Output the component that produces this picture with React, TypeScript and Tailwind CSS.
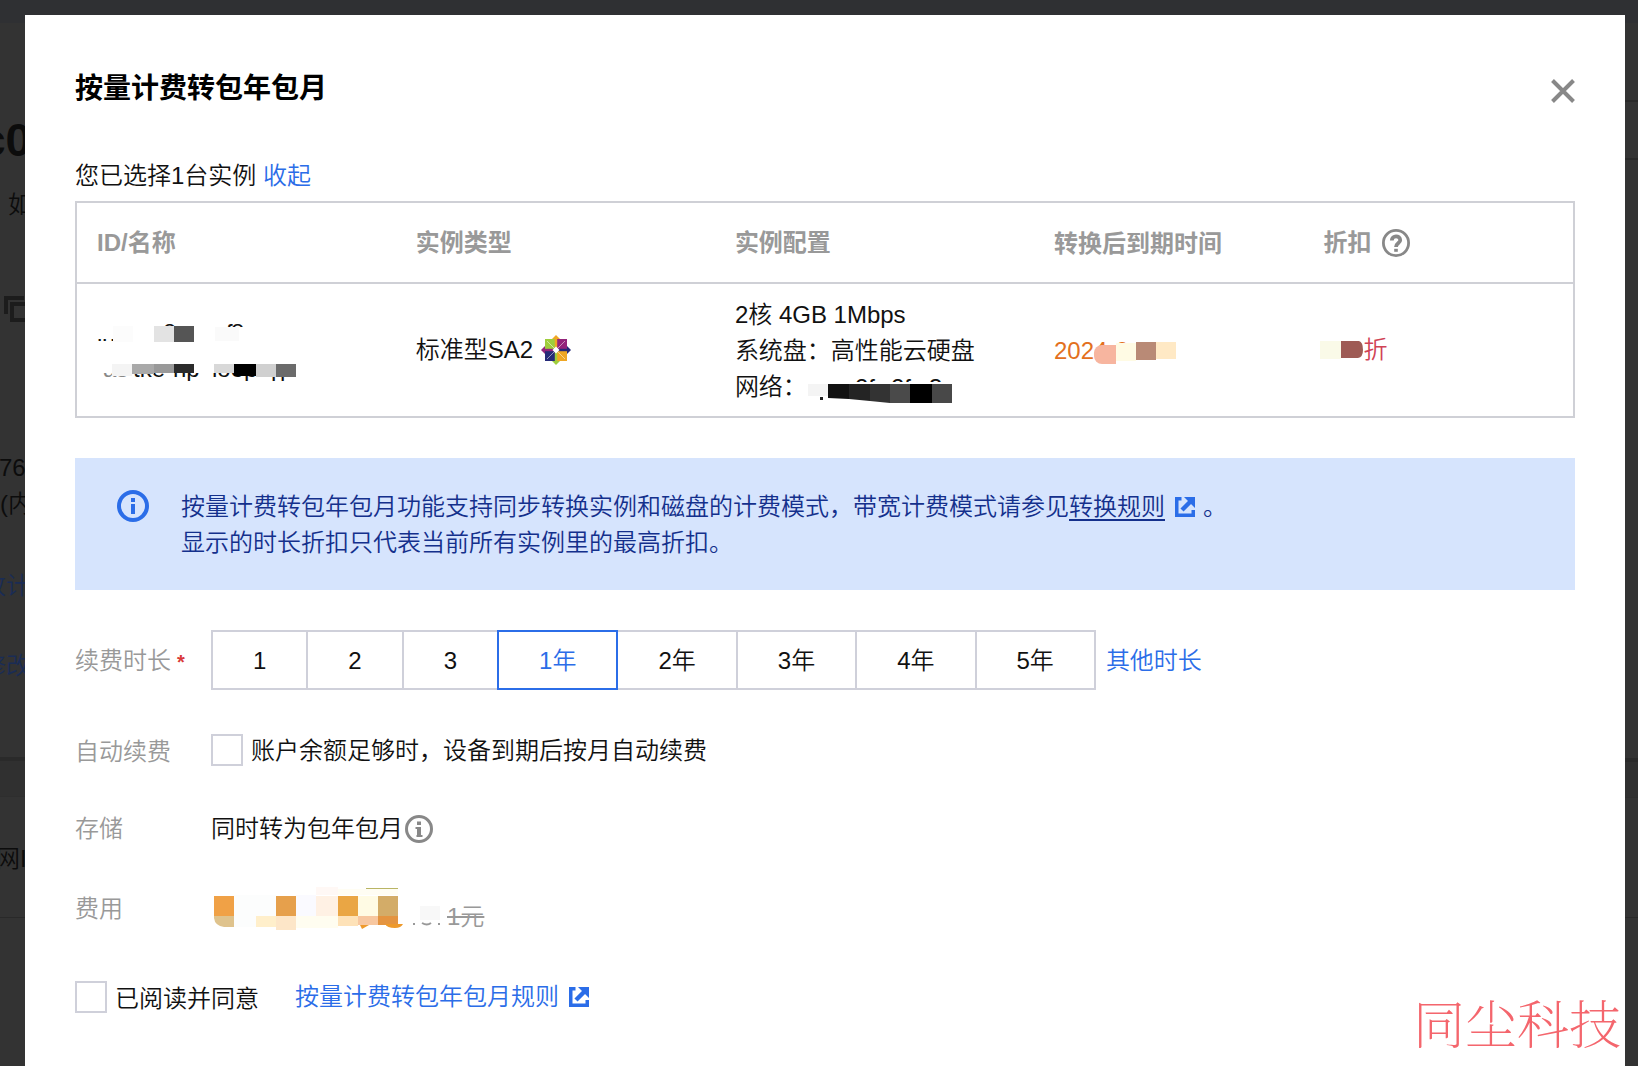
import React from "react";

const sans = "font-['Liberation_Sans','Noto_Sans_CJK_SC',sans-serif]";

function ExternalIcon() {
  return (
    <svg width="20" height="20" viewBox="0 0 20 20" fill="none" className="shrink-0" aria-hidden="true">
      <path d="M6.500 0H0V20H20V13H16.500V16.500H3.500V3.500H6.500Z" fill="#2b6de8" />
      <path d="M7 13L15 5" stroke="#2b6de8" strokeWidth="4.400" />
      <path d="M9 0H20V11L14.500 5.500Z" fill="#2b6de8" />
    </svg>
  );
}

function CentosLogo() {
  return (
    <svg width="30" height="30" viewBox="0 0 30 30" className="shrink-0" role="img" aria-label="CentOS">
      <path d="M4 4h10.500v10.500H4z" fill="#9fcd3c" />
      <path d="M15.500 4H26v10.500H15.500z" fill="#93247a" />
      <path d="M4 15.500h10.500V26H4z" fill="#262a78" />
      <path d="M15.500 15.500H26V26H15.500z" fill="#efa724" />
      <path d="M15 0l4 4h-8z" fill="#efa724" />
      <path d="M30 15l-4 4v-8z" fill="#262a78" />
      <path d="M15 30l-4-4h8z" fill="#9fcd3c" />
      <path d="M0 15l4-4v8z" fill="#93247a" />
      <path d="M13.800 3h2.400v10h-2.400z" fill="#efa724" />
      <path d="M17 13.800h10v2.400H17z" fill="#262a78" />
      <path d="M13.800 17h2.400v10h-2.400z" fill="#9fcd3c" />
      <path d="M3 13.800h10v2.400H3z" fill="#93247a" />
      <path d="M6 6l18 18M24 6L6 24" stroke="#fff" strokeWidth="1" opacity="0.500" />
      <path d="M15 11.500l3.500 3.500-3.500 3.500-3.500-3.500z" fill="#fff" />
    </svg>
  );
}

function InfoIcon({ size, color, stroke }: { size: number; color: string; stroke: number }) {
  return (
    <svg width={size} height={size} viewBox="0 0 32 32" fill="none" className="shrink-0" aria-hidden="true">
      <circle cx="16" cy="16" r={16 - stroke / 2} stroke={color} strokeWidth={stroke} />
      <path d="M14 8h4v4h-4zM14 14h4v10h-4z" fill={color} />
    </svg>
  );
}

function InfoSerifIcon() {
  return (
    <svg width="28" height="28" viewBox="0 0 28 28" fill="none" className="shrink-0" aria-hidden="true">
      <circle cx="14" cy="14" r="12.500" stroke="#888" strokeWidth="3" />
      <path d="M12 6.500h4v3.500h-4zM10.500 12H16v8h1.500v2h-6v-2H12v-6h-1.500z" fill="#888" />
    </svg>
  );
}

function HelpIcon() {
  return (
    <svg width="28" height="28" viewBox="0 0 28 28" fill="none" className="shrink-0" role="img" aria-label="帮助">
      <circle cx="14" cy="14" r="12.600" stroke="#888" strokeWidth="2.800" />
      <path d="M9.800 11.500C9.800 6 18.200 6 18.200 11.200C18.200 14 14 14 14 18" stroke="#888" strokeWidth="3.800" />
      <path d="M12.200 19.800h3.600v3h-3.600z" fill="#888" />
    </svg>
  );
}

type Block = [number, number, number, number, string];
function Blocks({ items }: { items: Block[] }) {
  return (
    <>
      {items.map(([x, y, w, h, c], i) => (
        <rect key={i} x={x} y={y} width={w} height={h} fill={c} />
      ))}
    </>
  );
}

function MaskedId() {
  return (
    <svg width="206" height="62" viewBox="0 0 206 62" className="block" fontSize="24" aria-hidden="true">
      <g fill="#111">
        <text x="0" y="22">i</text>
        <text x="5" y="22">n</text>
        <text x="66" y="22">8</text>
        <text x="129" y="22">f</text>
        <text x="134" y="22">8</text>
        <text x="36" y="58">tke</text>
        <text x="76" y="58">np</text>
        <text x="115" y="58">loop</text>
        <text x="166" y="58">q</text>
        <text x="183" y="58">p</text>
      </g>
      <text x="6" y="58" fill="#888">as</text>
      <Blocks
        items={[
          [0, 0, 60, 20, "#fff"],
          [60, 8, 90, 16, "#fff"],
          [0, 24, 206, 30, "#fff"],
          [16, 7, 20, 16, "#fcfcfc"],
          [57, 7, 20, 16, "#e3e3e3"],
          [77, 7, 20, 16, "#555"],
          [118, 8, 24, 14, "#fafafa"],
          [15, 45, 20, 12, "#f4f4f4"],
          [35, 45, 22, 10, "#a9a9a9"],
          [57, 45, 20, 9, "#999"],
          [77, 45, 20, 9, "#2b2b2b"],
          [117, 45, 20, 9, "#d8d8d8"],
          [137, 45, 22, 12, "#000"],
          [159, 45, 20, 13, "#d0d0d0"],
          [179, 45, 20, 13, "#6b6b6b"],
        ]}
      />
    </svg>
  );
}

function MaskedNetwork() {
  return (
    <svg width="150" height="32" viewBox="0 -3 150 32" className="block shrink-0" fontSize="24" aria-hidden="true">
      <g fill="#111">
        <text x="48" y="22">2f</text>
        <text x="84" y="22">2f</text>
        <text x="122" y="22">3c</text>
      </g>
      <path d="M0 8H150V30H0z" fill="#fff" />
      <Blocks items={[[1, 10, 20, 12, "#f4f4f4"], [13, 23, 3, 3, "#222"]]} />
      <path d="M21 10H42V25L21 24z" fill="#111" />
      <path d="M42 10H63V27L42 25z" fill="#242424" />
      <path d="M63 10H83V29L63 27z" fill="#333" />
      <path d="M83 10H103V30H88L83 29z" fill="#4a4a4a" />
      <path d="M103 10H125V30H103z" fill="#000" />
      <path d="M125 10H145V30H125z" fill="#484848" />
    </svg>
  );
}

function MaskedDate() {
  return (
    <svg width="124" height="28" viewBox="0 0 124 28" className="block" fontSize="24" aria-hidden="true">
      <text x="0" y="23" fill="#e37020">2024-0</text>
      <rect x="52" y="8" width="72" height="20" fill="#fff" />
      <rect x="40" y="9" width="22" height="19" rx="8" fill="#f7b59f" />
      <path d="M52 9H62V28H52z" fill="#f7b59f" />
      <Blocks items={[[62, 7, 20, 18, "#fffbe4"], [82, 6, 20, 18, "#b98a76"], [102, 6, 20, 17, "#ffe9c5"]]} />
    </svg>
  );
}

function MaskedFee() {
  return (
    <svg width="236" height="48" viewBox="0 0 236 48" className="block shrink-0" aria-hidden="true">
      <Blocks
        items={[
          [23, 10, 42, 32, "#fcfdfd"],
          [85, 10, 20, 32, "#fafaff"],
          [105, 2, 22, 8, "#fff8f5"],
          [127, 4, 60, 6, "#fffdf3"],
          [155, 3, 32, 1, "#b9b565"],
          [3, 11, 20, 20, "#f0a146"],
          [65, 11, 20, 20, "#e6a04c"],
          [105, 11, 22, 20, "#fff1e4"],
          [127, 11, 20, 20, "#eaa644"],
          [147, 11, 20, 20, "#fffbe4"],
          [167, 11, 20, 20, "#d3ac68"],
          [45, 31, 20, 11, "#ffefcb"],
          [65, 31, 20, 14, "#fde6c8"],
          [85, 31, 42, 12, "#fffdf0"],
          [127, 31, 20, 10, "#fee2b8"],
          [147, 31, 20, 9, "#f7c7a0"],
          [167, 31, 20, 9, "#e49440"],
          [209, 21, 20, 14, "#f8f8f8"],
          [202, 38, 2, 2, "#999"],
          [227, 38, 2, 2, "#999"],
        ]}
      />
      <path d="M3 31H23V42H13Q4 41 3 33z" fill="#dfc38d" />
      <path d="M149 40H158L151 44zM174 39H192Q190 43 184 43Q176 43 174 39z" fill="#ee9a2c" />
      <path d="M211 38Q216 41 220 38" stroke="#999" strokeWidth="2" fill="none" />
    </svg>
  );
}

function LeftBackdrop() {
  return (
    <div className="w-[25px] shrink-0 overflow-hidden whitespace-nowrap bg-[#333] text-2xl leading-9 text-[#0c0c0c]" aria-hidden="true">
      <div className="h-2 bg-[#2f3033]" />
      <div className="-ml-5 mt-[95px] text-[46px] font-bold leading-[44px]">c0</div>
      <div className="ml-2 mt-[25px]">如</div>
      <svg width="26" height="26" viewBox="0 0 26 26" fill="none" className="ml-1 mt-[73px] block" stroke="#1c1c1c" strokeWidth="4">
        <path d="M2 18V2H20" />
        <path d="M8 8H24V24H8z" />
      </svg>
      <div className="-ml-px mt-[128px]">76</div>
      <div>(内</div>
      <div className="-ml-[18px] mt-[46px] text-[#1a2c55]">改计</div>
      <div className="-ml-[18px] mt-11 text-[#1a2c55]">修改</div>
      <div className="mt-[73px] h-1 bg-[#2a2a2a]" />
      <div className="h-9 border-b border-[#2e2e2e] bg-[#303030]" />
      <div className="-ml-1 mt-11">网I</div>
      <div className="mt-10 border-t border-[#292929]" />
    </div>
  );
}

function RightBackdrop() {
  return (
    <div className="w-[13px] shrink-0 bg-[#333]" aria-hidden="true">
      <div className="h-2 bg-[#2f3033]" />
      <div className="mt-[77px] h-0.5 bg-[#292929]" />
      <div className="mt-14 h-0.5 bg-[#292929]" />
      <div className="mt-[598px] h-1 bg-[#2a2a2a]" />
      <div className="h-9 border-b border-[#2e2e2e] bg-[#303030]" />
      <div className="mt-[119px] border-t border-[#292929]" />
    </div>
  );
}

const durations = ["1", "2", "3", "1年", "2年", "3年", "4年", "5年"];

export default function App() {
  const [selected, setSelected] = React.useState("1年");
  const th = "px-5 text-left font-bold";
  const box = "size-8 shrink-0 appearance-none border-2 border-[#cfd0da] bg-white checked:bg-[#2b6de8]";
  return (
    <div className={`${sans} flex min-h-screen flex-col bg-[#2f3033] pt-[15px] text-2xl font-[350] leading-9 text-[#111]`}>
      <div className="flex flex-1">
        <LeftBackdrop />
        <main role="dialog" aria-labelledby="title" className="relative min-w-0 flex-1 bg-white px-[50px] pt-[54px]">
          <header className="flex items-center justify-between">
            <h1 id="title" className="text-[28px] font-bold leading-10 text-black">按量计费转包年包月</h1>
            <button type="button" aria-label="关闭" className="mt-1">
              <svg width="24" height="24" viewBox="0 0 24 24" stroke="#888" strokeWidth="4" className="block" aria-hidden="true">
                <path d="M1.500 1.500L22.500 22.500M22.500 1.500L1.500 22.500" />
              </svg>
            </button>
          </header>

          <p className="mt-[49px]">
            您已选择1台实例 <a href="#collapse" className="text-[#2b6de8]">收起</a>
          </p>

          <table className="mt-[7px] w-full table-fixed border-collapse border-2 border-[#cfd0d6]">
            <colgroup>
              <col className="w-[21.350%]" />
              <col className="w-[21.300%]" />
              <col className="w-[21.300%]" />
              <col className="w-[18%]" />
              <col />
            </colgroup>
            <thead>
              <tr className="h-[81px] border-b-2 border-[#cfd0d6] text-[#999]">
                <th scope="col" className={th}>ID/名称</th>
                <th scope="col" className={th}>实例类型</th>
                <th scope="col" className={th}>实例配置</th>
                <th scope="col" className={`${th} pt-0.5`}>转换后到期时间</th>
                <th scope="col" className={th}>
                  <span className="flex items-center gap-2.5">折扣 <HelpIcon /></span>
                </th>
              </tr>
            </thead>
            <tbody>
              <tr className="h-[134px]">
                <td className="px-5"><MaskedId /></td>
                <td className="px-5">
                  <span className="flex items-center gap-2">标准型SA2 <CentosLogo /></span>
                </td>
                <td className="px-5 pt-0.5">
                  <div>2核 4GB 1Mbps</div>
                  <div>系统盘：高性能云硬盘</div>
                  <div className="flex items-center">网络：<MaskedNetwork /></div>
                </td>
                <td className="px-5"><MaskedDate /></td>
                <td className="px-4 text-[#d04355]">
                  <span className="flex items-center">
                    <svg width="44" height="18" viewBox="0 0 44 18" className="block" aria-hidden="true">
                      <path d="M0 0H21V18H0z" fill="#fafae8" />
                      <path d="M21 0H39Q43 1 43 9Q43 16 38 17H21z" fill="#9e5b55" />
                    </svg>
                    折
                  </span>
                </td>
              </tr>
            </tbody>
          </table>

          <section className="mt-10 flex items-start gap-8 bg-[#d6e4fd] pb-[29px] pl-[42px] pr-10 pt-[31px] text-[#14308c]">
            <span className="flex h-[34px] items-center"><InfoIcon size={32} color="#2b6de8" stroke={4} /></span>
            <div>
              <p className="flex items-center">
                按量计费转包年包月功能支持同步转换实例和磁盘的计费模式，带宽计费模式请参见
                <a href="#rules" className="mr-2.5 underline decoration-2 underline-offset-4">转换规则</a>
                <ExternalIcon />
                <span className="ml-2">。</span>
              </p>
              <p>显示的时长折扣只代表当前所有实例里的最高折扣。</p>
            </div>
          </section>

          <div className="mt-10 flex items-center">
            <div className="w-[136px] shrink-0 pt-0.5 text-[#999]">
              续费时长<span className="ml-1.5 text-xl font-bold text-[#d93a3a]">*</span>
            </div>
            <div className="flex" role="group" aria-label="续费时长">
              {durations.map((d, i) => (
                <button
                  key={d}
                  type="button"
                  aria-pressed={d === selected}
                  onClick={() => setSelected(d)}
                  className={`h-[60px] border-2 px-10 pt-0.5 ${i > 0 ? "-ml-0.5" : ""} ${
                    d === selected ? "relative border-[#2b6de8] text-[#2b6de8]" : "border-[#cfd0da]"
                  }`}
                >
                  {d}
                </button>
              ))}
            </div>
            <a href="#other" className="ml-2.5 pt-0.5 text-[#2b6de8]">其他时长</a>
          </div>

          <div className="mt-10 flex items-center">
            <div className="w-[136px] shrink-0 pt-1 text-[#999]">自动续费</div>
            <label className="flex items-center gap-2">
              <input type="checkbox" className={box} />
              <span className="pt-0.5">账户余额足够时，设备到期后按月自动续费</span>
            </label>
          </div>

          <div className="mt-10 flex items-center pt-px">
            <div className="w-[136px] shrink-0 text-[#999]">存储</div>
            <div className="flex items-center gap-0.5">同时转为包年包月<InfoSerifIcon /></div>
          </div>

          <div className="mt-9 flex items-center">
            <div className="w-[136px] shrink-0 text-[#999]">费用</div>
            <MaskedFee />
            <s className="mt-4 text-[#999]">1元</s>
          </div>

          <div className="mt-[42px] flex items-center pb-12">
            <label className="flex items-center gap-2">
              <input type="checkbox" className={box} />
              <span className="pt-1">已阅读并同意</span>
            </label>
            <a href="#agreement" className="ml-9 flex items-center gap-2.5 text-[#2b6de8]">
              按量计费转包年包月规则
              <ExternalIcon />
            </a>
          </div>

          <div className="absolute bottom-2 right-1 font-['Noto_Serif_CJK_SC','Noto_Sans_CJK_SC',serif] text-[52px] font-thin leading-[72px] text-[#f4666d]">
            同尘科技
          </div>
        </main>
        <RightBackdrop />
      </div>
    </div>
  );
}
